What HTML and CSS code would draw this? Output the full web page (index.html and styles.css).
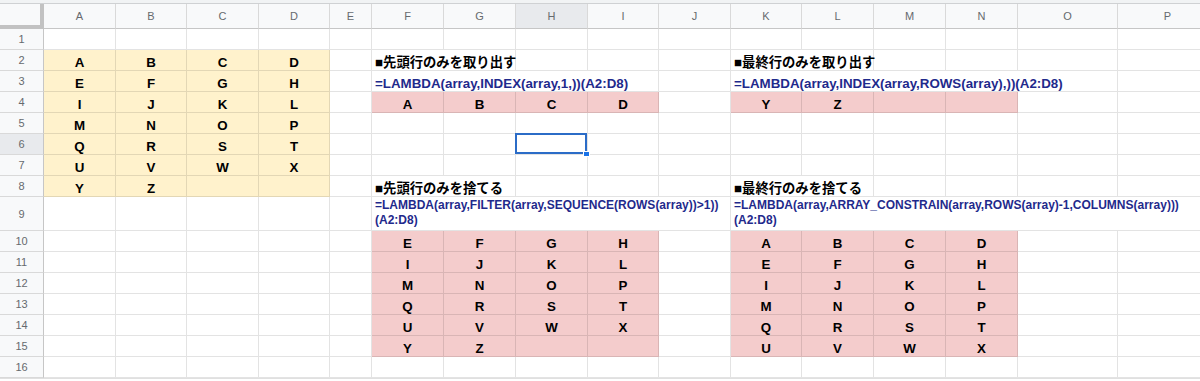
FILE: index.html
```html
<!DOCTYPE html>
<html lang="ja">
<head>
<meta charset="utf-8">
<title>LAMBDA sheet</title>
<link rel="stylesheet" href="styles.css">
</head>
<body>
<div class="topbar"></div>
<div class="sheet">
  <div class="corner"></div>
  <div class="ch">A</div><div class="ch">B</div><div class="ch">C</div><div class="ch">D</div><div class="ch">E</div><div class="ch">F</div><div class="ch">G</div><div class="ch hs">H</div><div class="ch">I</div><div class="ch">J</div><div class="ch">K</div><div class="ch">L</div><div class="ch">M</div><div class="ch">N</div><div class="ch">O</div><div class="ch">P</div>

  <div class="rh">1</div>
  <div class="c"></div><div class="c"></div><div class="c"></div><div class="c"></div><div class="c"></div><div class="c"></div><div class="c"></div><div class="c"></div><div class="c"></div><div class="c"></div><div class="c"></div><div class="c"></div><div class="c"></div><div class="c"></div><div class="c"></div><div class="c"></div>

  <div class="rh">2</div>
  <div class="c y ctr">A</div><div class="c y ctr">B</div><div class="c y ctr">C</div><div class="c y ctr">D</div>
  <div class="c"></div>
  <div class="c ov s2">■先頭行のみを取り出す</div>
  <div class="c"></div><div class="c"></div><div class="c"></div>
  <div class="c ov s2">■最終行のみを取り出す</div>
  <div class="c"></div><div class="c"></div><div class="c"></div><div class="c"></div>

  <div class="rh">3</div>
  <div class="c y ctr">E</div><div class="c y ctr">F</div><div class="c y ctr">G</div><div class="c y ctr">H</div>
  <div class="c"></div>
  <div class="c f ov s4">=LAMBDA(array,INDEX(array,1,))(A2:D8)</div>
  <div class="c"></div>
  <div class="c f ov s5">=LAMBDA(array,INDEX(array,ROWS(array),))(A2:D8)</div>
  <div class="c"></div>

  <div class="rh">4</div>
  <div class="c y ctr">I</div><div class="c y ctr">J</div><div class="c y ctr">K</div><div class="c y ctr">L</div>
  <div class="c"></div>
  <div class="c p ctr">A</div><div class="c p ctr">B</div><div class="c p ctr">C</div><div class="c p ctr">D</div>
  <div class="c"></div>
  <div class="c p ctr">Y</div><div class="c p ctr">Z</div><div class="c p ctr"></div><div class="c p ctr"></div>
  <div class="c"></div><div class="c"></div>

  <div class="rh">5</div>
  <div class="c y ctr">M</div><div class="c y ctr">N</div><div class="c y ctr">O</div><div class="c y ctr">P</div>
  <div class="c"></div><div class="c"></div><div class="c"></div><div class="c"></div><div class="c"></div><div class="c"></div><div class="c"></div><div class="c"></div><div class="c"></div><div class="c"></div><div class="c"></div><div class="c"></div>

  <div class="rh hs">6</div>
  <div class="c y ctr">Q</div><div class="c y ctr">R</div><div class="c y ctr">S</div><div class="c y ctr">T</div>
  <div class="c"></div><div class="c"></div><div class="c"></div>
  <div class="c sel"><span class="handle"></span></div>
  <div class="c"></div><div class="c"></div><div class="c"></div><div class="c"></div><div class="c"></div><div class="c"></div><div class="c"></div><div class="c"></div>

  <div class="rh">7</div>
  <div class="c y ctr">U</div><div class="c y ctr">V</div><div class="c y ctr">W</div><div class="c y ctr">X</div>
  <div class="c"></div><div class="c"></div><div class="c"></div><div class="c"></div><div class="c"></div><div class="c"></div><div class="c"></div><div class="c"></div><div class="c"></div><div class="c"></div><div class="c"></div><div class="c"></div>

  <div class="rh">8</div>
  <div class="c y ctr">Y</div><div class="c y ctr">Z</div><div class="c y ctr"></div><div class="c y ctr"></div>
  <div class="c"></div>
  <div class="c ov s2">■先頭行のみを捨てる</div>
  <div class="c"></div><div class="c"></div><div class="c"></div>
  <div class="c ov s2">■最終行のみを捨てる</div>
  <div class="c"></div><div class="c"></div><div class="c"></div><div class="c"></div>

  <div class="rh">9</div>
  <div class="c"></div><div class="c"></div><div class="c"></div><div class="c"></div><div class="c"></div>
  <div class="c f m s5">=LAMBDA(array,FILTER(array,SEQUENCE(ROWS(array))&gt;1))<wbr>(A2:D8)</div>
  <div class="c f m s6">=LAMBDA(array,ARRAY_CONSTRAIN(array,ROWS(array)-1,COLUMNS(array)))<wbr>(A2:D8)</div>

  <div class="rh">10</div>
  <div class="c"></div><div class="c"></div><div class="c"></div><div class="c"></div><div class="c"></div>
  <div class="c p ctr">E</div><div class="c p ctr">F</div><div class="c p ctr">G</div><div class="c p ctr">H</div>
  <div class="c"></div>
  <div class="c p ctr">A</div><div class="c p ctr">B</div><div class="c p ctr">C</div><div class="c p ctr">D</div>
  <div class="c"></div><div class="c"></div>

  <div class="rh">11</div>
  <div class="c"></div><div class="c"></div><div class="c"></div><div class="c"></div><div class="c"></div>
  <div class="c p ctr">I</div><div class="c p ctr">J</div><div class="c p ctr">K</div><div class="c p ctr">L</div>
  <div class="c"></div>
  <div class="c p ctr">E</div><div class="c p ctr">F</div><div class="c p ctr">G</div><div class="c p ctr">H</div>
  <div class="c"></div><div class="c"></div>

  <div class="rh">12</div>
  <div class="c"></div><div class="c"></div><div class="c"></div><div class="c"></div><div class="c"></div>
  <div class="c p ctr">M</div><div class="c p ctr">N</div><div class="c p ctr">O</div><div class="c p ctr">P</div>
  <div class="c"></div>
  <div class="c p ctr">I</div><div class="c p ctr">J</div><div class="c p ctr">K</div><div class="c p ctr">L</div>
  <div class="c"></div><div class="c"></div>

  <div class="rh">13</div>
  <div class="c"></div><div class="c"></div><div class="c"></div><div class="c"></div><div class="c"></div>
  <div class="c p ctr">Q</div><div class="c p ctr">R</div><div class="c p ctr">S</div><div class="c p ctr">T</div>
  <div class="c"></div>
  <div class="c p ctr">M</div><div class="c p ctr">N</div><div class="c p ctr">O</div><div class="c p ctr">P</div>
  <div class="c"></div><div class="c"></div>

  <div class="rh">14</div>
  <div class="c"></div><div class="c"></div><div class="c"></div><div class="c"></div><div class="c"></div>
  <div class="c p ctr">U</div><div class="c p ctr">V</div><div class="c p ctr">W</div><div class="c p ctr">X</div>
  <div class="c"></div>
  <div class="c p ctr">Q</div><div class="c p ctr">R</div><div class="c p ctr">S</div><div class="c p ctr">T</div>
  <div class="c"></div><div class="c"></div>

  <div class="rh">15</div>
  <div class="c"></div><div class="c"></div><div class="c"></div><div class="c"></div><div class="c"></div>
  <div class="c p ctr">Y</div><div class="c p ctr">Z</div><div class="c p ctr"></div><div class="c p ctr"></div>
  <div class="c"></div>
  <div class="c p ctr">U</div><div class="c p ctr">V</div><div class="c p ctr">W</div><div class="c p ctr">X</div>
  <div class="c"></div><div class="c"></div>

  <div class="rh">16</div>
  <div class="c"></div><div class="c"></div><div class="c"></div><div class="c"></div><div class="c"></div><div class="c"></div><div class="c"></div><div class="c"></div><div class="c"></div><div class="c"></div><div class="c"></div><div class="c"></div><div class="c"></div><div class="c"></div><div class="c"></div><div class="c"></div>
</div>
</body>
</html>
```

FILE: styles.css
```css
* { box-sizing: border-box; }

html, body {
  margin: 0;
  padding: 0;
  background: #ffffff;
  overflow: hidden;
}

body {
  width: 1200px;
  height: 381px;
  font-family: "Liberation Sans", Arial, "Noto Sans CJK JP", sans-serif;
}

.topbar {
  height: 4px;
  background: #f1f3f4;
  border-bottom: 1px solid #cfd1d3;
}

.sheet {
  display: grid;
  width: 1218px;
  grid-template-columns: 44px 72px 71px 72px 71px 42px 72px 72px 72px 71px 72px 71px 72px 72px 72px 100px 100px;
  grid-template-rows: 25px repeat(8, 21px) 34px repeat(7, 21px);
  border-bottom: 1px solid #e0e0e0;
}

.corner {
  background: #f8f9fa;
  border-right: 4px solid #c2c2c2;
  border-bottom: 4px solid #c2c2c2;
}

.ch,
.rh {
  background: #f8f9fa;
  display: flex;
  align-items: center;
  justify-content: center;
  font-family: "Liberation Sans", Arial, sans-serif;
  font-size: 11px;
  color: #666a6e;
}

.ch {
  border-right: 1px solid #d9d9d9;
  border-bottom: 1px solid #c6c6c6;
}

.rh {
  border-right: 1px solid #c6c6c6;
  border-bottom: 1px solid #d9d9d9;
}

.hs { background: #e8eaed; }

.c {
  border-right: 1px solid rgba(0, 0, 0, 0.11);
  border-bottom: 1px solid rgba(0, 0, 0, 0.11);
  display: flex;
  align-items: flex-end;
  padding: 0 3px;
  font-size: 13.33px;
  line-height: 15px;
  font-weight: bold;
  color: #000000;
  white-space: nowrap;
  min-width: 0;
}

.ctr { justify-content: center; }

.y { background: #fff2cc; }
.p { background: #f4cccc; }

.f { color: #1f2a8c; }

.ov {
  overflow: visible;
  z-index: 1;
}

.m {
  white-space: normal;
  font-size: 12px;
  line-height: 15px;
  padding-bottom: 2px;
}

.s2 { grid-column: span 2; }
.s4 { grid-column: span 4; }
.s5 { grid-column: span 5; }
.s6 { grid-column: span 6; }

.sel {
  position: relative;
  z-index: 2;
}

.sel::before {
  content: "";
  position: absolute;
  top: -1px;
  left: -1px;
  right: 0;
  bottom: 0;
  border: 2px solid #2b6cc7;
}

.handle {
  position: absolute;
  right: -3px;
  bottom: -3px;
  width: 7px;
  height: 6px;
  background: #1a73e8;
  border: 1px solid #ffffff;
}
```
